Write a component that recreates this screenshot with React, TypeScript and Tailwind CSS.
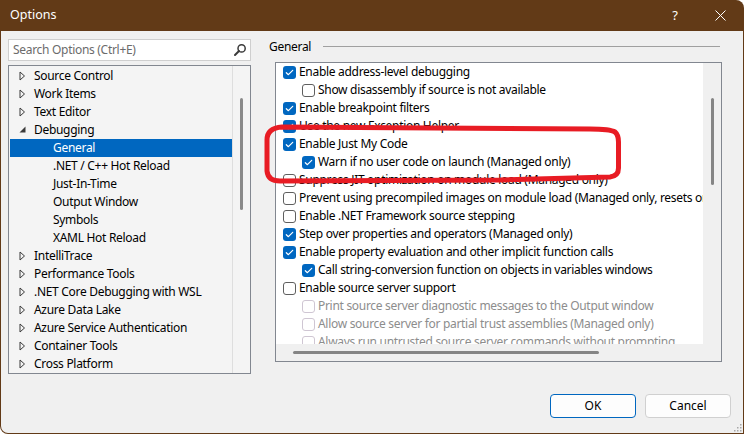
import React from "react";

const FONT = { fontFamily: '"Noto Sans", "Open Sans", sans-serif' };

type TreeItem = { label: string; level: 0 | 1; state?: "collapsed" | "expanded"; selected?: boolean };

const treeItems: TreeItem[] = [
  { label: "Source Control", level: 0, state: "collapsed" },
  { label: "Work Items", level: 0, state: "collapsed" },
  { label: "Text Editor", level: 0, state: "collapsed" },
  { label: "Debugging", level: 0, state: "expanded" },
  { label: "General", level: 1, selected: true },
  { label: ".NET / C++ Hot Reload", level: 1 },
  { label: "Just-In-Time", level: 1 },
  { label: "Output Window", level: 1 },
  { label: "Symbols", level: 1 },
  { label: "XAML Hot Reload", level: 1 },
  { label: "IntelliTrace", level: 0, state: "collapsed" },
  { label: "Performance Tools", level: 0, state: "collapsed" },
  { label: ".NET Core Debugging with WSL", level: 0, state: "collapsed" },
  { label: "Azure Data Lake", level: 0, state: "collapsed" },
  { label: "Azure Service Authentication", level: 0, state: "collapsed" },
  { label: "Container Tools", level: 0, state: "collapsed" },
  { label: "Cross Platform", level: 0, state: "collapsed" },
];

type Opt = { label: string; checked?: boolean; indent?: boolean; disabled?: boolean };

const opts: Opt[] = [
  { label: "Enable address-level debugging", checked: true },
  { label: "Show disassembly if source is not available", indent: true },
  { label: "Enable breakpoint filters", checked: true },
  { label: "Use the new Exception Helper", checked: true },
  { label: "Enable Just My Code", checked: true },
  { label: "Warn if no user code on launch (Managed only)", checked: true, indent: true },
  { label: "Suppress JIT optimization on module load (Managed only)" },
  { label: "Prevent using precompiled images on module load (Managed only, resets on process restart)" },
  { label: "Enable .NET Framework source stepping" },
  { label: "Step over properties and operators (Managed only)", checked: true },
  { label: "Enable property evaluation and other implicit function calls", checked: true },
  { label: "Call string-conversion function on objects in variables windows", checked: true, indent: true },
  { label: "Enable source server support" },
  { label: "Print source server diagnostic messages to the Output window", indent: true, disabled: true },
  { label: "Allow source server for partial trust assemblies (Managed only)", indent: true, disabled: true },
  { label: "Always run untrusted source server commands without prompting", indent: true, disabled: true },
];

function CheckBox({ checked, disabled }: { checked?: boolean; disabled?: boolean }) {
  if (checked) {
    return (
      <span className="w-[13px] h-[13px] shrink-0 rounded-[3px] bg-[#0067c0] flex items-center justify-center">
        <svg width="13" height="13" viewBox="0 0 13 13">
          <path d="M3.3 6.7 L5.4 8.7 L9.7 4.3" fill="none" stroke="#ffffff" strokeWidth="1.2" strokeLinecap="round" strokeLinejoin="round" />
        </svg>
      </span>
    );
  }
  return (
    <span
      className={
        disabled
          ? "w-[13px] h-[13px] shrink-0 rounded-[3px] border border-[#cfc6d3] bg-white"
          : "w-[13px] h-[13px] shrink-0 rounded-[3px] border border-[#5f5f5f] bg-white"
      }
    />
  );
}

function Arrow({ state }: { state?: "collapsed" | "expanded" }) {
  if (state === "expanded") {
    return (
      <svg width="7" height="7" viewBox="0 0 7 7" className="mt-[-2px]">
        <path d="M6.5 0.5 L6.5 6.5 L0.5 6.5 Z" fill="#3a3a3a" />
      </svg>
    );
  }
  return (
    <svg width="7" height="10" viewBox="0 0 7 10">
      <path d="M1 1 L5.5 5 L1 9 Z" fill="none" stroke="#3a3a3a" strokeWidth="1" strokeLinejoin="round" />
    </svg>
  );
}

export default function App() {
  return (
    <div className="w-[744px] h-[434px] bg-white">
      <div
        className="relative w-[744px] h-[434px] bg-[#623a17] rounded-tr-[8px] rounded-bl-[8px] flex flex-col overflow-hidden text-[12px] tracking-[-0.3px] text-black"
        style={FONT}
      >
        {/* Title bar */}
        <div className="h-[31px] shrink-0 flex items-center text-white">
          <span className="pl-[10px] text-[12.5px] tracking-[0px]">Options</span>
          <span className="ml-auto text-[13px] tracking-[0px]">?</span>
          <svg width="11" height="11" viewBox="0 0 11 11" className="ml-[37px] mr-[18px]">
            <path d="M0.5 0.5 L10.5 10.5 M10.5 0.5 L0.5 10.5" stroke="#ffffff" strokeWidth="1" />
          </svg>
        </div>

        {/* Body */}
        <div className="relative flex-1 mx-[1px] mb-[1px] bg-[#f0f0f0] rounded-bl-[7px] flex flex-col">
          <div className="flex pt-[8px]">
            {/* Left column */}
            <div className="ml-[7px] w-[243px] flex flex-col">
              <div className="h-[22px] bg-white border border-[#cfcfcf] flex items-center pl-[4px] pr-[3px]">
                <span className="text-[#6b6b6b] flex-1">Search Options (Ctrl+E)</span>
                <svg width="14" height="14" viewBox="0 0 14 14">
                  <circle cx="8.6" cy="5.4" r="3.6" fill="none" stroke="#3a3a3a" strokeWidth="1.5" />
                  <path d="M6 8 L2 12" stroke="#3a3a3a" strokeWidth="2" strokeLinecap="round" />
                </svg>
              </div>
              <div className="mt-[4px] h-[309px] border border-[#828790] bg-[#f4f4f4] flex">
                <div className="flex-1 pt-[1px] pl-[1px] overflow-hidden">
                  {treeItems.map((it) => (
                    <div
                      key={it.label}
                      className={
                        it.selected
                          ? "h-[18px] flex items-center bg-[#0067c0] text-white"
                          : "h-[18px] flex items-center"
                      }
                    >
                      {it.level === 0 ? (
                        <>
                          <span className="w-[9px]" />
                          <span className="w-[15px] flex items-center">
                            <Arrow state={it.state} />
                          </span>
                          <span className="whitespace-nowrap">{it.label}</span>
                        </>
                      ) : (
                        <span className="pl-[43px] whitespace-nowrap">{it.label}</span>
                      )}
                    </div>
                  ))}
                </div>
                <div className="w-[18px] border-l border-[#dedede] pt-[32px] pl-[7px]">
                  <div className="w-[3px] h-[112px] rounded-full bg-[#8a8a8a]" />
                </div>
              </div>
            </div>

            {/* Right column */}
            <div className="ml-[18px] w-[452px] flex flex-col">
              <div className="h-[15px] flex items-center">
                <span>General</span>
                <div className="ml-auto mr-[1px] w-[397px] h-[1px] bg-[#a0a0a0]" />
              </div>
              <div className="mt-[8px] ml-[6px] w-[447px] h-[300px] border border-[#828790] flex flex-col">
                <div className="flex h-[281px]">
                  <div className="flex-1 bg-white overflow-hidden">
                    {opts.map((o) => (
                      <div
                        key={o.label}
                        className={
                          o.indent
                            ? "h-[18px] flex items-center pl-[26px] whitespace-nowrap"
                            : "h-[18px] flex items-center pl-[7px] whitespace-nowrap"
                        }
                      >
                        <CheckBox checked={o.checked} disabled={o.disabled} />
                        <span className={o.disabled ? "ml-[3px] text-[#8d8d8d]" : "ml-[3px]"}>{o.label}</span>
                      </div>
                    ))}
                  </div>
                  <div className="w-[18px] bg-[#f0f0f0] pt-[35px] pl-[8px]">
                    <div className="w-[3px] h-[87px] rounded-full bg-[#858585]" />
                  </div>
                </div>
                <div className="flex-1 bg-[#f0f0f0] pt-[7px] pl-[17px]">
                  <div className="w-[306px] h-[3px] rounded-full bg-[#858585]" />
                </div>
              </div>
            </div>
          </div>

          {/* Buttons */}
          <div className="mt-[20px] flex justify-end pr-[12px] gap-[9px]">
            <button className="w-[86px] h-[24px] rounded-[4px] border border-[#0067c0] bg-[#fdfdfd] text-black text-[12px] tracking-[0px] flex items-center justify-center">
              OK
            </button>
            <button className="w-[86px] h-[24px] rounded-[4px] border border-[#d0d0d0] bg-[#fdfdfd] text-black text-[12px] tracking-[0px] flex items-center justify-center">
              Cancel
            </button>
          </div>

          {/* Resize grip */}
          <svg width="9" height="9" viewBox="0 0 9 9" className="absolute right-[1px] bottom-[1px]">
            <rect x="7" y="1" width="1.5" height="1.5" fill="#a8a8a8" />
            <rect x="4" y="4" width="1.5" height="1.5" fill="#a8a8a8" />
            <rect x="7" y="4" width="1.5" height="1.5" fill="#a8a8a8" />
            <rect x="1" y="7" width="1.5" height="1.5" fill="#a8a8a8" />
            <rect x="4" y="7" width="1.5" height="1.5" fill="#a8a8a8" />
            <rect x="7" y="7" width="1.5" height="1.5" fill="#a8a8a8" />
          </svg>
        </div>

        {/* Red hand-drawn annotation */}
        <svg width="744" height="434" className="absolute left-0 top-0 pointer-events-none">
          <path
            d="M267 171 L267 140 Q267 128 282 127 L590 129 Q610 129 615 132 Q618.5 135 618.5 142 L618.5 168 Q618.5 176 610 177 L500 180 L280 181 Q268 181 267 171 Z"
            fill="none"
            stroke="#e81c24"
            strokeWidth="5"
            strokeLinejoin="round"
          />
        </svg>
      </div>
    </div>
  );
}
